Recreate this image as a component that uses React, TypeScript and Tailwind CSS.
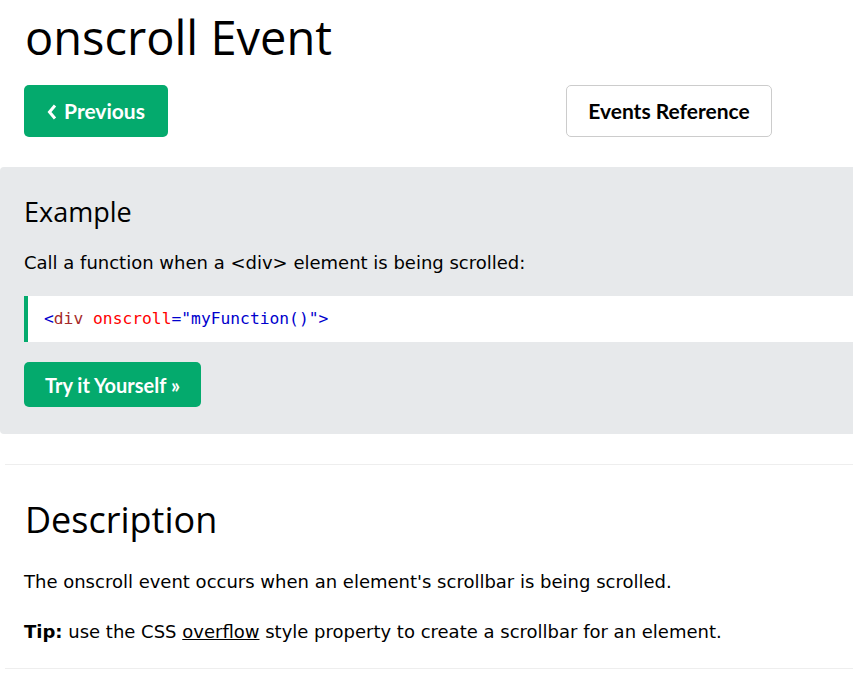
const heading = "font-['Segoe_UI','Open_Sans',sans-serif]";
const body = "font-['Verdana','DejaVu_Sans',sans-serif]";
const btn = "font-['Source_Sans_Pro','Lato',sans-serif]";
const mono = "font-['Consolas','DejaVu_Sans_Mono',monospace]";

const GreenButton = ({ children, className = "" }: { children: React.ReactNode; className?: string }) => (
  <a
    href="#"
    className={`inline-flex items-center justify-center rounded-[5px] bg-[#04AA6D] text-white font-bold ${btn} ${className}`}
  >
    {children}
  </a>
);

export default function App() {
  return (
    <div className="min-h-screen bg-white text-black overflow-hidden">
      {/* titel en navigatie */}
      <div className="px-6">
        <h1 className={`${heading} text-[47px] leading-[56px] pt-[9px] pl-px`}>onscroll Event</h1>
        <div className="mt-[20px] flex items-center justify-between w-[748px]">
          <GreenButton className="h-[52px] w-[144px] text-[21px] gap-[7px]">
            <svg width="10" height="16" viewBox="0 0 10 16" className="mt-[1px]">
              <path d="M8 1.5 L2.5 8 L8 14.5" fill="none" stroke="white" strokeWidth="3" strokeLinejoin="miter" />
            </svg>
            Previous
          </GreenButton>
          <a
            href="#"
            className={`flex items-center justify-center h-[52px] w-[206px] rounded-[5px] border border-[#cccccc] text-[21px] font-bold ${btn}`}
          >
            Events Reference
          </a>
        </div>
      </div>

      {/* voorbeeld */}
      <div className="mt-[30px] bg-[#E7E9EB] rounded-l-[4px] pl-6 pt-[25px] pb-[27px]">
        <h2 className={`${heading} text-[27px] leading-[40px]`}>Example</h2>
        <p className={`${body} text-[18px] leading-[27px] mt-[17px]`}>Call a function when a &lt;div&gt; element is being scrolled:</p>
        <div className={`mt-[20px] bg-white border-l-4 border-[#04AA6D] h-[46px] flex items-center pl-[16px] ${mono} text-[16.3px]`}>
          <span className="text-[mediumblue]">&lt;</span>
          <span className="text-[brown]">div</span>
          <span className="text-[red]">&nbsp;onscroll</span>
          <span className="text-[mediumblue]">="myFunction()"&gt;</span>
        </div>
        <GreenButton className="mt-[20px] h-[45px] w-[177px] text-[20px]">Try it Yourself »</GreenButton>
      </div>

      <hr className="mt-[30px] ml-[5px] border-0 border-t border-[#eeeeee]" />

      {/* beschrijving */}
      <div className="px-6">
        <h2 className={`${heading} text-[36px] leading-[50px] mt-[30px] pl-px`}>Description</h2>
        <p className={`${body} text-[18px] leading-[27px] mt-[23px]`}>The onscroll event occurs when an element's scrollbar is being scrolled.</p>
        <p className={`${body} text-[18px] leading-[27px] mt-[23px]`}>
          <b>Tip:</b> use the CSS <a href="#" className="underline">overflow</a> style property to create a scrollbar for an element.
        </p>
      </div>

      <hr className="mt-[23px] ml-[5px] border-0 border-t border-[#eeeeee]" />
    </div>
  );
}
